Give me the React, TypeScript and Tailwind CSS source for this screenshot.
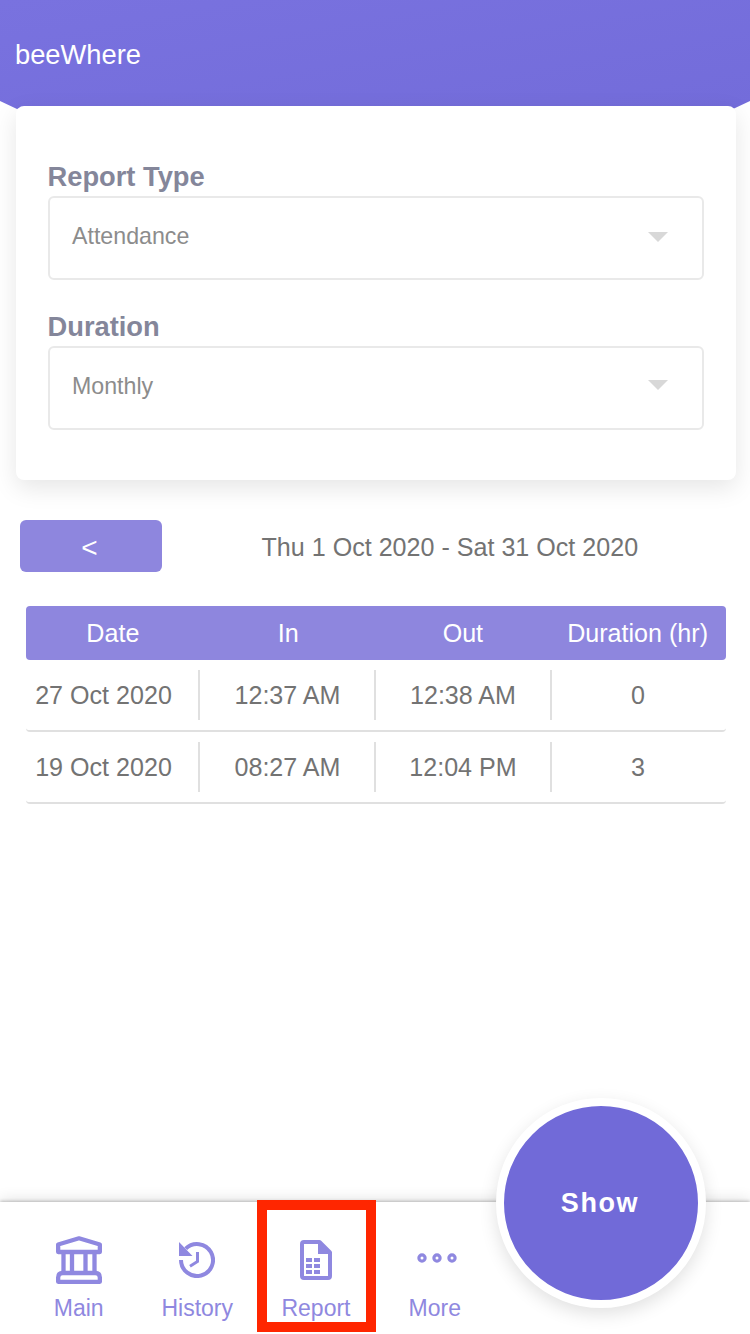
import React from "react";

const records = [
  { date: "27 Oct 2020", timeIn: "12:37 AM", timeOut: "12:38 AM", hours: "0" },
  { date: "19 Oct 2020", timeIn: "08:27 AM", timeOut: "12:04 PM", hours: "3" },
];

function BankIcon() {
  return (
    <svg width="46" height="48" viewBox="0 0 46 48" fill="none" stroke="#8f88e0" strokeWidth="4.3" strokeLinejoin="round">
      <path d="M2.150 16V8.500L23 2.300l20.850 6.200V16Z" />
      <path d="M7.500 16v21M16 16v21M29.500 16v21M38.500 16v21" />
      <path d="M2.150 45.850V41.500q0-4.500 4.500-4.500h32.700q4.500 0 4.500 4.500v4.350Z" />
    </svg>
  );
}

function HistoryIcon() {
  return (
    <svg width="36" height="36" viewBox="0 0 36 36" fill="none" stroke="#8f88e0" strokeWidth="4">
      <path d="M2 18A16 16 0 1 0 6.700 6.700" />
      <path d="M0 0v14h13.500z" fill="#8f88e0" stroke="none" />
      <path d="M18.500 10v9.500l-7.500 4.700" strokeWidth="3" />
    </svg>
  );
}

function ReportIcon() {
  return (
    <svg width="32" height="40" viewBox="0 0 32 40" fill="none" stroke="#8f88e0" strokeWidth="4" strokeLinejoin="round">
      <path d="M4 2H19.500L30 12.500V36q0 2-2 2H4q-2 0-2-2V4q0-2 2-2Z" />
      <path d="M18 2v12h12L20 2z" fill="#8f88e0" stroke="none" />
      <path d="M6 18h6v4H6zM14 18h6v4h-6zM6 24h6v4H6zM14 24h6v4h-6zM6 30h6v4H6zM14 30h6v4h-6z" fill="#8f88e0" stroke="none" />
    </svg>
  );
}

function MoreIcon() {
  return (
    <svg width="40" height="10" viewBox="0 0 40 10" fill="none" stroke="#8f88e0" strokeWidth="3.2" className="mb-1 ml-1">
      <circle cx="5" cy="5" r="3.100" />
      <circle cx="20" cy="5" r="3.100" />
      <circle cx="35" cy="5" r="3.100" />
    </svg>
  );
}

function Field({ label, value, caret }: { label: string; value: string; caret: string }) {
  return (
    <div>
      <div className="-ml-[0.500px] h-10 pt-px text-[27.300px] leading-10 font-bold text-[#84869a]">{label}</div>
      <div className="flex h-[84px] justify-between rounded-[6px] border-2 border-[#e9e9e9] pr-[34px] pl-[22px]">
        <span className="text-[23.200px] leading-[76px] text-[#8c8c8c]">{value}</span>
        <svg width="20" height="10" viewBox="0 0 20 10" className={caret}>
          <path d="M0 0h20L10 10z" fill="#d8d8d8" />
        </svg>
      </div>
    </div>
  );
}

function Tab({ label, active, children }: { label: string; active?: boolean; children: React.ReactNode }) {
  return (
    <div className={active ? "-mt-0.5 h-[132px] w-[119px] border-10 border-[#ff2600] pt-[18px] pr-px" : "w-[118.500px] pt-[26px] pr-px"}>
      <div className="flex flex-col items-center">
        <div className="flex h-16 items-center">{children}</div>
        <span className="h-8 text-[23px] leading-8 text-[#8f88e0]">{label}</span>
      </div>
    </div>
  );
}

export default function App() {
  return (
    <div className="relative flex h-[1334px] w-[750px] flex-col overflow-hidden bg-white font-['Liberation_Sans',sans-serif]">
      <header className="h-[109px] shrink-0 bg-linear-170 from-[#7972df] to-[#736cda] pt-[38px] pl-[15px] text-[27.300px] leading-[34px] text-white [clip-path:polygon(0_0,100%_0,100%_101px,733px_109px,17px_109px,0_101px)]">
        beeWhere
      </header>

      <section className="relative -mt-[3px] ml-4 flex h-[374px] w-[720px] shrink-0 flex-col gap-[26px] rounded-[8px] bg-white px-8 pt-[50px] shadow-[0_8px_24px_rgba(0,0,0,0.1)]">
        <Field label="Report Type" value="Attendance" caret="mt-[34px]" />
        <Field label="Duration" value="Monthly" caret="mt-8" />
      </section>

      <div className="mt-10 ml-5 flex h-[52px] shrink-0 items-center text-[25.100px]">
        <button className="h-[52px] w-[142px] rounded-[6px] bg-[#8e86de] pt-[3px] pr-[3px] text-[28px] leading-[49px] text-white">&lt;</button>
        <span className="ml-[99.500px] pt-1 whitespace-nowrap text-[#737373]">Thu 1 Oct 2020 - Sat 31 Oct 2020</span>
      </div>

      <div className="mt-[34px] ml-[26px] w-[700px] shrink-0 text-[25.100px]">
        <div className="grid h-[54px] grid-cols-4 rounded-[4px] bg-[#8e86de] pr-px text-center leading-[55px] whitespace-nowrap text-white">
          <span className="pr-px">Date</span>
          <span>In</span>
          <span>Out</span>
          <span>Duration (hr)</span>
        </div>
        {records.map((r) => (
          <div key={r.date} className="flex h-[72px] rounded-[4px] border-b-2 border-[#e0e0e0] py-2.5 text-center leading-[50px] whitespace-nowrap text-[#737373]">
            <span className="w-[174px] border-r-2 border-[#e0e0e0] pr-[17px]">{r.date}</span>
            <span className="w-[176px] border-r-2 border-[#e0e0e0] pl-px">{r.timeIn}</span>
            <span className="w-[176px] border-r-2 border-[#e0e0e0]">{r.timeOut}</span>
            <span className="w-[172px]">{r.hours}</span>
          </div>
        ))}
      </div>

      <nav className="relative mt-auto flex h-[132px] shrink-0 bg-white pl-5 shadow-[0_-1px_3px_rgba(0,0,0,0.22),0_-2px_14px_rgba(0,0,0,0.12)]">
        <Tab label="Main"><BankIcon /></Tab>
        <Tab label="History"><HistoryIcon /></Tab>
        <Tab label="Report" active><ReportIcon /></Tab>
        <Tab label="More"><MoreIcon /></Tab>
      </nav>

      <button className="absolute top-[1098px] left-[496px] h-[210px] w-[210px] rounded-full border-8 border-white bg-[#716ad8] pr-0.5 text-[27px] font-bold tracking-[1.600px] text-white shadow-[0_6px_18px_rgba(0,0,0,0.12)]">
        Show
      </button>
    </div>
  );
}
